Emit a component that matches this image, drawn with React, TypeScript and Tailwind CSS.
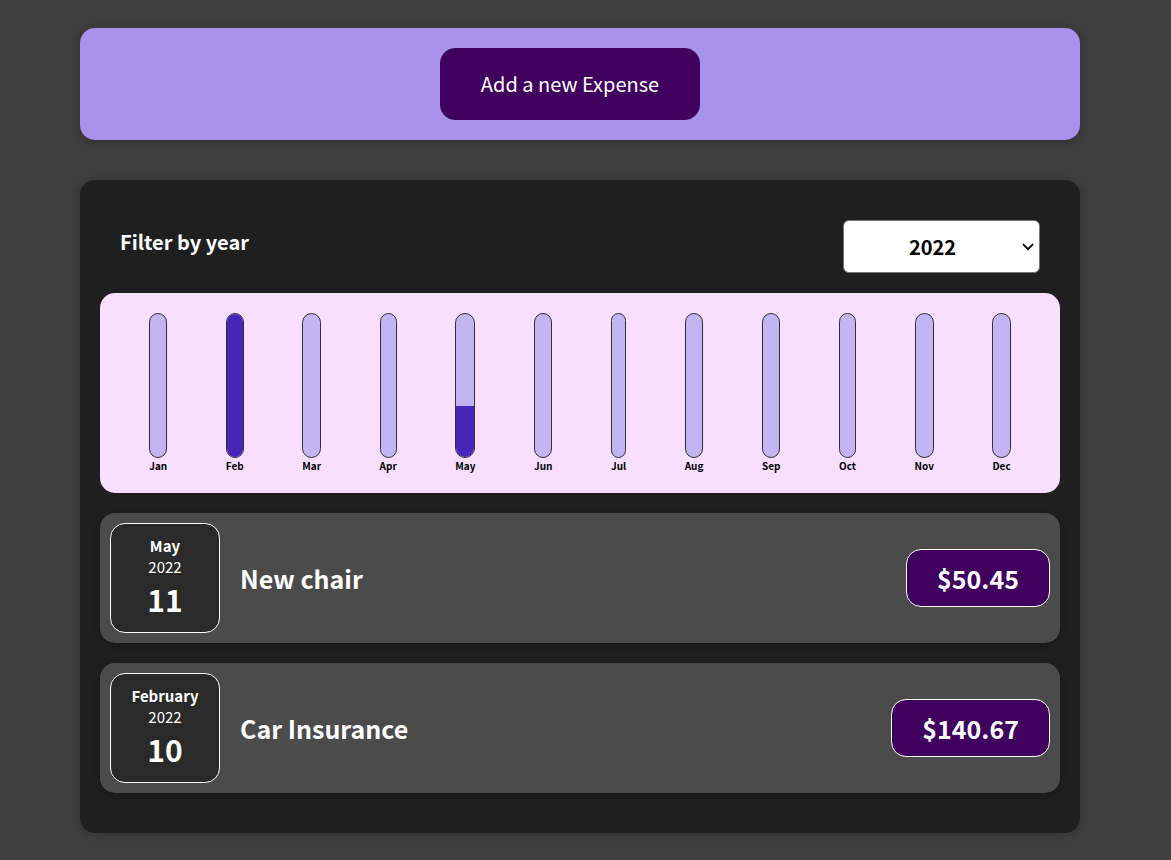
import { useState } from "react";

type Expense = {
  id: string;
  title: string;
  amount: number;
  date: Date;
};

const MONTHS = ["Jan", "Feb", "Mar", "Apr", "May", "Jun", "Jul", "Aug", "Sep", "Oct", "Nov", "Dec"];
const YEARS = ["2023", "2022", "2021", "2020"];

const EXPENSES: Expense[] = [
  { id: "e1", title: "New chair", amount: 50.45, date: new Date(2022, 4, 11) },
  { id: "e2", title: "Car Insurance", amount: 140.67, date: new Date(2022, 1, 10) },
];

function NewExpense() {
  return (
    <section className="rounded-[15px] bg-[#a992ec] p-5 text-center shadow-[0_1px_8px_rgba(0,0,0,0.25)]">
      <button
        type="button"
        className="mr-5 cursor-pointer rounded-[15px] border border-[#40005d] bg-[#40005d] px-10 py-5 align-top text-xl leading-[30px] text-white"
      >
        Add a new Expense
      </button>
    </section>
  );
}

function YearFilter({ year, onChange }: { year: string; onChange: (year: string) => void }) {
  return (
    <div className="flex items-center justify-between p-5">
      <label htmlFor="year" className="pb-[10px] text-xl leading-8 font-bold text-white">
        Filter by year
      </label>
      <div className="relative">
        <select
          id="year"
          value={year}
          onChange={(event) => onChange(event.target.value)}
          className="block h-[53px] w-[197px] appearance-none rounded-md border border-[#767676] bg-white pr-[18px] text-center text-xl font-bold text-black"
        >
          {YEARS.map((option) => (
            <option key={option} value={option}>
              {option}
            </option>
          ))}
        </select>
        <svg
          aria-hidden="true"
          viewBox="0 0 12 8"
          className="pointer-events-none absolute top-1/2 right-1.5 h-2 w-3 -translate-y-1/2"
          fill="none"
          stroke="#000"
          strokeWidth="1.8"
        >
          <path d="M1 1.2 6 6.2 11 1.2" />
        </svg>
      </div>
    </div>
  );
}

function Chart({ expenses }: { expenses: Expense[] }) {
  const totals = MONTHS.map((_, month) =>
    expenses.filter((e) => e.date.getMonth() === month).reduce((sum, e) => sum + e.amount, 0),
  );
  const max = Math.max(...totals);

  return (
    <div className="flex h-[200px] justify-around rounded-[15px] bg-[#f8dfff] p-5">
      {MONTHS.map((label, month) => (
        <div key={label} className="flex h-full flex-col items-center">
          <div className="flex w-full flex-1 flex-col justify-end overflow-hidden rounded-[15px] border border-[#313131] bg-[#c3b4f3]">
            <div
              className="bg-[#4826b9]"
              style={{ height: max > 0 ? `${Math.round((totals[month] / max) * 100)}%` : "0%" }}
            />
          </div>
          <div className="text-[10px] leading-[15px] font-bold text-black">{label}</div>
        </div>
      ))}
    </div>
  );
}

function ExpenseItem({ expense }: { expense: Expense }) {
  return (
    <li className="flex items-center gap-5 rounded-[15px] bg-[#4b4b4b] p-[10px] text-white shadow-[0_2px_8px_rgba(0,0,0,0.25)]">
      <div className="flex size-[110px] flex-col items-center justify-center rounded-[15px] border border-white bg-[#2a2a2a]">
        <div className="text-[15px] leading-[22px] font-bold">
          {expense.date.toLocaleString("en-US", { month: "long" })}
        </div>
        <div className="text-[15px] leading-5">{expense.date.getFullYear()}</div>
        <div className="text-[30px] leading-[44px] font-bold">{expense.date.getDate()}</div>
      </div>
      <h2 className="flex-1 text-[25px] leading-9 font-bold">{expense.title}</h2>
      <div className="rounded-[15px] border border-white bg-[#40005d] px-[30px] py-[10px] text-[25px] leading-9 font-bold">
        ${expense.amount.toFixed(2)}
      </div>
    </li>
  );
}

export default function App() {
  const [year, setYear] = useState("2022");
  const shown = EXPENSES.filter((e) => String(e.date.getFullYear()) === year);

  return (
    <div className="min-h-screen bg-[#3f3f3f] py-7 pr-[11px] font-['Noto_Sans_CJK_JP',sans-serif]">
      <main className="mx-auto flex max-w-[1000px] flex-col gap-10">
        <NewExpense />
        <section className="rounded-[15px] bg-[#1f1f1f] px-5 pt-5 pb-10 shadow-[0_1px_8px_rgba(0,0,0,0.25)]">
          <YearFilter year={year} onChange={setYear} />
          <Chart expenses={shown} />
          <ul className="mt-5 flex flex-col gap-5">
            {shown.map((expense) => (
              <ExpenseItem key={expense.id} expense={expense} />
            ))}
          </ul>
        </section>
      </main>
    </div>
  );
}
